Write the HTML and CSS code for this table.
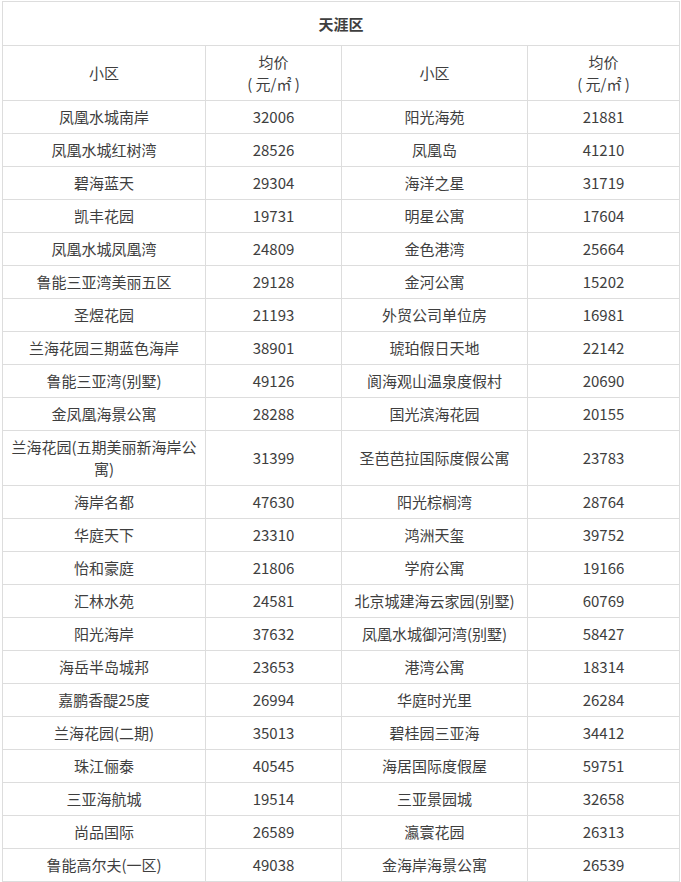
FILE: index.html
```html
<!DOCTYPE html>
<html lang="zh-CN">
<head>
<meta charset="utf-8">
<title>天涯区</title>
<link rel="stylesheet" href="styles.css">
</head>
<body>
<table class="price-table">
  <colgroup>
    <col class="c1"><col class="c2"><col class="c3"><col class="c4">
  </colgroup>
  <thead>
    <tr><th class="title" colspan="4">天涯区</th></tr>
    <tr class="head">
      <td>小区</td><td>均价<br>( 元/㎡ )</td>
      <td>小区</td><td>均价<br>( 元/㎡ )</td>
    </tr>
  </thead>
  <tbody>
    <tr><td>凤凰水城南岸</td><td>32006</td><td>阳光海苑</td><td>21881</td></tr>
    <tr><td>凤凰水城红树湾</td><td>28526</td><td>凤凰岛</td><td>41210</td></tr>
    <tr><td>碧海蓝天</td><td>29304</td><td>海洋之星</td><td>31719</td></tr>
    <tr><td>凯丰花园</td><td>19731</td><td>明星公寓</td><td>17604</td></tr>
    <tr><td>凤凰水城凤凰湾</td><td>24809</td><td>金色港湾</td><td>25664</td></tr>
    <tr><td>鲁能三亚湾美丽五区</td><td>29128</td><td>金河公寓</td><td>15202</td></tr>
    <tr><td>圣煜花园</td><td>21193</td><td>外贸公司单位房</td><td>16981</td></tr>
    <tr><td>兰海花园三期蓝色海岸</td><td>38901</td><td>琥珀假日天地</td><td>22142</td></tr>
    <tr><td>鲁能三亚湾(别墅)</td><td>49126</td><td>阆海观山温泉度假村</td><td>20690</td></tr>
    <tr><td>金凤凰海景公寓</td><td>28288</td><td>国光滨海花园</td><td>20155</td></tr>
    <tr><td>兰海花园(五期美丽新海岸公寓)</td><td>31399</td><td>圣芭芭拉国际度假公寓</td><td>23783</td></tr>
    <tr><td>海岸名都</td><td>47630</td><td>阳光棕榈湾</td><td>28764</td></tr>
    <tr><td>华庭天下</td><td>23310</td><td>鸿洲天玺</td><td>39752</td></tr>
    <tr><td>怡和豪庭</td><td>21806</td><td>学府公寓</td><td>19166</td></tr>
    <tr><td>汇林水苑</td><td>24581</td><td>北京城建海云家园(别墅)</td><td>60769</td></tr>
    <tr><td>阳光海岸</td><td>37632</td><td>凤凰水城御河湾(别墅)</td><td>58427</td></tr>
    <tr><td>海岳半岛城邦</td><td>23653</td><td>港湾公寓</td><td>18314</td></tr>
    <tr><td>嘉鹏香醍25度</td><td>26994</td><td>华庭时光里</td><td>26284</td></tr>
    <tr><td>兰海花园(二期)</td><td>35013</td><td>碧桂园三亚海</td><td>34412</td></tr>
    <tr><td>珠江俪泰</td><td>40545</td><td>海居国际度假屋</td><td>59751</td></tr>
    <tr><td>三亚海航城</td><td>19514</td><td>三亚景园城</td><td>32658</td></tr>
    <tr><td>尚品国际</td><td>26589</td><td>瀛寰花园</td><td>26313</td></tr>
    <tr><td>鲁能高尔夫(一区)</td><td>49038</td><td>金海岸海景公寓</td><td>26539</td></tr>
  </tbody>
</table>
</body>
</html>
```
FILE: styles.css
```css
html, body {
  margin: 0;
  padding: 0;
  background: #fff;
}
body {
  padding: 1px 0 0 2px;
  font-family: "Noto Sans CJK SC", "Noto Sans", "Liberation Sans", sans-serif;
  font-size: 15px;
  color: #3e3e3e;
}
.price-table {
  border-collapse: collapse;
  table-layout: fixed;
  width: 677px;
}
.c1 { width: 203px; }
.c2 { width: 136px; }
.c3 { width: 186px; }
.c4 { width: 152px; }
.price-table th,
.price-table td {
  border: 1px solid #dddddd;
  text-align: center;
  vertical-align: middle;
  line-height: 22px;
  padding: 5px 6px;
  word-break: break-all;
}
.price-table th.title {
  font-weight: bold;
  padding: 11px 6px 10px;
}
```
